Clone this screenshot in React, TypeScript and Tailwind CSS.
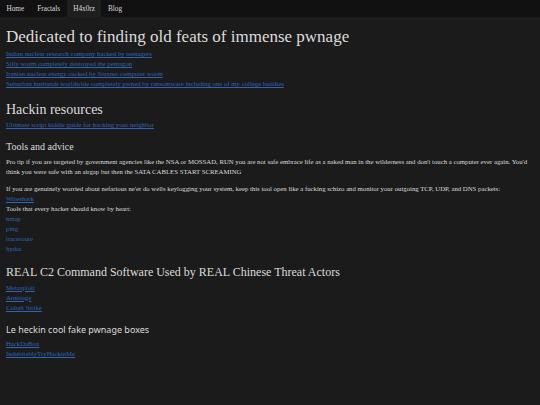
const navItems = ["Home", "Fractals", "H4x0rz", "Blog"];

const pwnage = [
  "Indian nuclear research company hacked by teenagers",
  "Silly worm completely destroyed the pentagon",
  "Iranian nuclear energy cucked by Stuxnet computer worm",
  "Suburban husbands worldwide completely pwned by ransomware including one of my college buddies",
];

const tools = ["nmap", "ping", "traceroute", "hydra"];
const c2 = ["Metasploit", "Armitage", "Cobalt Strike"];
const boxes = ["HackDaBox", "IndubitablyTryHackinMe"];

const linkCls = "text-[#3063b5] underline";

const App = () => {
  return (
    <div className="min-h-[405px] bg-[#1b1b1b] text-[#dcdcdc] [font-family:'Liberation_Serif',serif] text-[6.75px] leading-[10px]">
      <nav className="flex h-[17px] bg-[#111111]">
        {navItems.map((item) => (
          <div
            key={item}
            className={`flex items-center px-[6.5px] text-[7.25px] ${item === "H4x0rz" ? "bg-[#1f1f1f]" : ""}`}
          >
            {item}
          </div>
        ))}
      </nav>
      <div className="px-[6px]">
        <h1 className="text-[17px] leading-[20px] mt-[10px] mb-[2px]">
          Dedicated to finding old feats of immense pwnage
        </h1>
        {pwnage.map((p) => (
          <div key={p}>
            <a className={linkCls}>{p}</a>
          </div>
        ))}
        <h2 className="text-[14px] leading-[17px] mt-[12px] mb-[2px]">Hackin resources</h2>
        <div>
          <a className={linkCls}>Ultimate script kiddie guide for hacking your neighbor</a>
        </div>
        <h3 className="text-[10px] leading-[12px] mt-[11px] mb-[4px]">Tools and advice</h3>
        <p>
          Pro tip if you are targeted by government agencies like the NSA or MOSSAD, RUN you are not safe embrace life as a naked man in the wilderness and don't touch a computer ever again. You'd think you were safe with an airgap but then the SATA CABLES START SCREAMING
        </p>
        <p className="mt-[7px]">
          If you are genuinely worried about nefarious ne'er do wells keylogging your system, keep this tool open like a fucking schizo and monitor your outgoing TCP, UDP, and DNS packets:
        </p>
        <div>
          <a className={linkCls}>Wireshark</a>
        </div>
        <p>Tools that every hacker should know by heart:</p>
        {tools.map((t) => (
          <div key={t} className="text-[#3063b5]">
            {t}
          </div>
        ))}
        <h2 className="text-[12px] leading-[14px] mt-[11px] mb-[3.5px]">
          REAL C2 Command Software Used by REAL Chinese Threat Actors
        </h2>
        {c2.map((c) => (
          <div key={c}>
            <a className={linkCls}>{c}</a>
          </div>
        ))}
        <h3 className="[font-family:'Noto_Sans',sans-serif] text-[9px] leading-[12px] mt-[11px] mb-[3.5px]">
          Le heckin cool fake pwnage boxes
        </h3>
        {boxes.map((b) => (
          <div key={b}>
            <a className={linkCls}>{b}</a>
          </div>
        ))}
      </div>
    </div>
  );
};

export default App;
